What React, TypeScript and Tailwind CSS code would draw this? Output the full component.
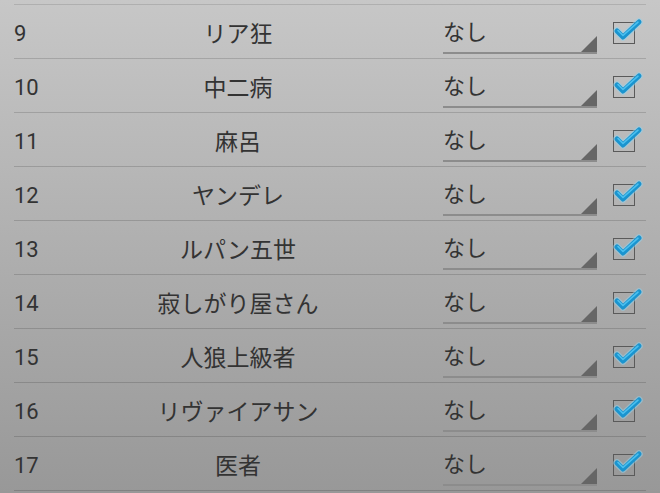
import React from "react";

interface Item {
  no: number;
  name: string;
  value: string;
  checked: boolean;
}

const items: Item[] = [
  { no: 9, name: "リア狂", value: "なし", checked: true },
  { no: 10, name: "中二病", value: "なし", checked: true },
  { no: 11, name: "麻呂", value: "なし", checked: true },
  { no: 12, name: "ヤンデレ", value: "なし", checked: true },
  { no: 13, name: "ルパン五世", value: "なし", checked: true },
  { no: 14, name: "寂しがり屋さん", value: "なし", checked: true },
  { no: 15, name: "人狼上級者", value: "なし", checked: true },
  { no: 16, name: "リヴァイアサン", value: "なし", checked: true },
  { no: 17, name: "医者", value: "なし", checked: true },
];

const Check = () => (
  <div className="relative w-[22px] h-[22px] border-[1.5px] border-[#5a5a5a]">
    <svg
      className="absolute left-[-1px] top-[-4px] overflow-visible"
      width="30"
      height="24"
      viewBox="0 0 30 24"
    >
      <path
        d="M4 12 L10 18 L26 3"
        fill="none"
        stroke="#8fd3f0"
        strokeOpacity="0.5"
        strokeWidth="7.5"
        strokeLinecap="round"
        strokeLinejoin="round"
      />
      <path
        d="M4 12 L10 18 L26 3"
        fill="none"
        stroke="#1a94cf"
        strokeWidth="5"
        strokeLinecap="round"
        strokeLinejoin="round"
      />
      <path
        d="M5 11.5 L10 16.5 L25 3.2"
        fill="none"
        stroke="#4cc0ef"
        strokeWidth="1.6"
        strokeLinecap="round"
        strokeLinejoin="round"
      />
    </svg>
  </div>
);

const Dropdown = ({ value }: { value: string }) => (
  <div className="ml-[81px] w-[154px] h-[36px] self-end mb-[4px] flex justify-between border-b-2 border-[#8c8c8c]">
    <span className="text-[22px] leading-[24px] text-[#333] font-['Noto_Sans_CJK_JP',sans-serif]">
      {value}
    </span>
    <svg width="16" height="16" viewBox="0 0 16 16" className="block self-end">
      <polygon points="16,0 16,16 0,16" fill="#666666" />
    </svg>
  </div>
);

const App = () => {
  return (
    <div className="w-[660px] h-[493px] overflow-hidden bg-linear-to-b from-[#c7c7c7] to-[#989898] pt-[4px]">
      <div className="ml-[14px] w-[632px] border-t border-[#a9a9a9]/80">
        {items.map((item) => (
          <div
            key={item.no}
            className="h-[54px] flex items-stretch border-b border-black/15"
          >
            <div className="w-[100px] flex items-center pt-[4px] text-[22px] text-[#333] font-['Roboto',sans-serif]">
              {item.no}
            </div>
            <div className="w-[248px] flex items-center justify-center pt-[1px] text-[23px] text-[#333] font-['Noto_Sans_CJK_JP',sans-serif]">
              {item.name}
            </div>
            <Dropdown value={item.value} />
            <div className="ml-[16px] flex items-center pt-[2px]">
              {item.checked && <Check />}
            </div>
          </div>
        ))}
      </div>
    </div>
  );
};

export default App;
